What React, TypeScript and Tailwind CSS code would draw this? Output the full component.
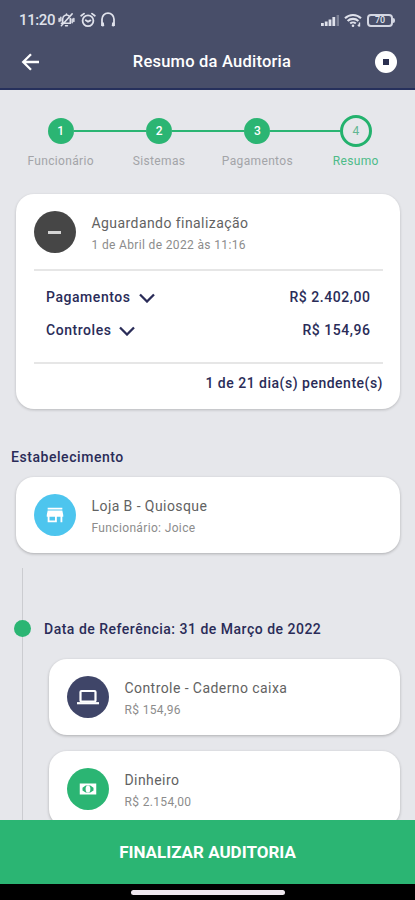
import type { ReactNode } from 'react';
import { MdStore } from 'react-icons/md';

interface Step {
  number: number;
  label: string;
}

interface InfoCardProps {
  icon: ReactNode;
  color: string;
  title: string;
  subtitle: string;
}

const steps: Step[] = [
  { number: 1, label: 'Funcionário' },
  { number: 2, label: 'Sistemas' },
  { number: 3, label: 'Pagamentos' },
  { number: 4, label: 'Resumo' },
];

const totals = [
  { label: 'Pagamentos', value: 'R$ 2.402,00' },
  { label: 'Controles', value: 'R$ 154,96' },
];

function StatusBar() {
  return (
    <div className="flex h-10 items-center justify-between pr-[20px] pl-[19px] text-[#dfe1eb]">
      <div className="flex items-center">
        <span className="w-[37px] text-[15px] font-medium whitespace-nowrap tracking-[-0.4px]">
          11:20
        </span>
        {/* muted bell */}
        <svg className="ml-[2px] h-[16px] w-[17px]" viewBox="0 0 18 17" fill="none" stroke="currentColor" strokeWidth="1.6" strokeLinecap="round">
          <path d="M5 11.5V7a4 4 0 0 1 7-2.4M13 7v5H6.5M3.5 12H6M8 14.5h2M15 2 3.5 14.5M1.2 7v3M3 5.5v4M15 7.5v4M16.8 7v3M9 2v1" />
        </svg>
        {/* alarm */}
        <svg className="ml-[5px] h-4 w-4" viewBox="0 0 16 16" fill="none" stroke="currentColor" strokeWidth="1.8" strokeLinecap="round">
          <circle cx="8" cy="8.8" r="5.4" />
          <path d="M1.2 3.8 4 1.6M14.8 3.8 12 1.6M5.8 8.2 8 9.8l2.4-1.4" />
        </svg>
        {/* headphones */}
        <svg className="ml-[4px] h-4 w-4" viewBox="0 0 16 16" fill="none" stroke="currentColor" strokeWidth="1.8" strokeLinecap="round">
          <path d="M3.4 13.2H2V7.2a6 6 0 0 1 12 0v6h-1.4" />
          <path d="M2.8 11.5v1.8M13.2 11.5v1.8" strokeWidth="2.4" />
        </svg>
      </div>
      <div className="flex items-center">
        <svg className="h-[14px] w-[20px]" viewBox="0 0 20 14" fill="currentColor">
          <rect x="0" y="10" width="2.8" height="3" />
          <rect x="3.8" y="8.5" width="2.8" height="4.5" />
          <rect x="7.6" y="6.5" width="2.8" height="6.5" />
          <rect x="11.4" y="4" width="2.8" height="9" />
          <rect x="15.6" y="2" width="2.4" height="11" opacity="0.35" />
        </svg>
        <svg className="ml-[3px] h-[15px] w-[18px]" viewBox="0 0 18 15" fill="none" stroke="currentColor" strokeWidth="2.1">
          <path d="M1 5.2a11.5 11.5 0 0 1 16 0M3.6 8a7.8 7.8 0 0 1 10.8 0M6.2 10.6a4 4 0 0 1 5.6 0" />
          <circle cx="9" cy="12.8" r="1.3" fill="currentColor" stroke="none" />
          <path d="M15.5 9.5v4M13.8 11.8l1.7 1.7" strokeWidth="1.4" />
        </svg>
        <div className="ml-[5px] flex items-center">
          <div className="flex h-[13px] w-[26px] items-center justify-center rounded-[4px] border-2 border-[#d3d6e2] text-[9px] leading-none font-medium">
            70
          </div>
          <div className="h-[5px] w-[2px] rounded-r bg-[#d3d6e2]" />
        </div>
      </div>
    </div>
  );
}

function Header() {
  return (
    <header className="h-[90px] shrink-0 border-b-2 border-[#26305c] bg-[#484e69]">
      <StatusBar />
      <div className="flex h-[44px] items-center pr-[18px] pl-[21px] text-white">
        <svg className="h-[18px] w-[22px] shrink-0" viewBox="0 0 22 18" fill="none" stroke="currentColor" strokeWidth="2.3">
          <path d="M18 9H2.5M10 1.2 2.2 9l7.8 7.8" />
        </svg>
        <h1 className="flex-1 pl-[6px] text-center text-[16.5px] font-medium tracking-[0.22px]">
          Resumo da Auditoria
        </h1>
        <div className="flex size-[22px] shrink-0 items-center justify-center rounded-full bg-white">
          <div className="size-[6px] bg-[#2b3050]" />
        </div>
      </div>
    </header>
  );
}

function Stepper() {
  return (
    <div className="grid grid-cols-4 pt-[25px] pr-[10px] pl-[11.5px]">
      {steps.map(({ number, label }, index) => {
        const isCurrent = index === steps.length - 1;
        return (
          <div key={number} className="flex flex-col items-center">
            <div className="flex h-8 w-full items-center">
              <div className={`h-0.5 flex-1 ${index > 0 ? 'bg-[#2bb573]' : ''}`} />
              {isCurrent ? (
                <div className="flex size-8 items-center justify-center rounded-full border-3 border-[#23b26d] text-[12px] text-[#62b692]">
                  {number}
                </div>
              ) : (
                <div className="flex size-[26px] items-center justify-center rounded-full bg-[#2bb573] text-[12px] font-medium text-white">
                  {number}
                </div>
              )}
              <div className={`h-0.5 flex-1 ${isCurrent ? '' : 'bg-[#2bb573]'}`} />
            </div>
            <span
              className={`mt-[6px] text-[12px] leading-4 tracking-[0.35px] ${isCurrent ? 'text-[#4dbb88]' : 'text-[#a3a4a8]'}`}
            >
              {label}
            </span>
          </div>
        );
      })}
    </div>
  );
}

function CardHeading({ icon, color, title, subtitle }: InfoCardProps) {
  return (
    <div className="flex items-center">
      <div className={`flex size-[42px] shrink-0 items-center justify-center rounded-full text-white ${color}`}>
        {icon}
      </div>
      <div className="ml-4 flex flex-col pt-[2px]">
        <span className="text-[14px] leading-6 tracking-[0.43px] text-[#626262]">{title}</span>
        <span className="text-[12px] leading-5 tracking-[0.35px] text-[#8c8c8c]">{subtitle}</span>
      </div>
    </div>
  );
}

function InfoCard(props: InfoCardProps) {
  return (
    <div className="flex h-[76px] items-center rounded-[18px] bg-white pl-[17.5px] shadow-[0_1px_3px_rgba(0,0,0,0.25)]">
      <CardHeading {...props} />
    </div>
  );
}

function SummaryCard() {
  return (
    <section className="mx-4 mt-[25px] h-[215px] w-[384px] rounded-[18px] bg-white pt-[15px] pr-[17px] pl-[17.5px] text-[#2a2c58] shadow-[0_1px_3px_rgba(0,0,0,0.2)]">
      <CardHeading
        icon={<div className="h-[3px] w-[13px] bg-[#d5d5d5]" />}
        color="bg-[#464646]"
        title="Aguardando finalização"
        subtitle="1 de Abril de 2022 às 11:16"
      />
      <div className="mt-[14px] h-0.5 bg-[#e6e6e6]" />
      <div className="flex flex-col px-[12.5px] pt-[10px]">
        {totals.map(({ label, value }) => (
          <div key={label} className="flex h-[33px] items-center text-[14px] font-medium">
            <span className="tracking-[0.55px]">{label}</span>
            <svg className="ml-[8px] h-[10px] w-4" viewBox="0 0 16 10" fill="none" stroke="currentColor" strokeWidth="2.3">
              <path d="m1 1.5 7 7 7-7" />
            </svg>
            <span className="ml-auto tracking-[0.55px]">{value}</span>
          </div>
        ))}
      </div>
      <div className="mt-[15px] h-0.5 bg-[#e6e6e6]" />
      <p className="mt-[9px] text-right text-[14px] leading-5 font-medium tracking-[0.5px]">
        1 de 21 dia(s) pendente(s)
      </p>
    </section>
  );
}

function LaptopIcon() {
  return (
    <svg className="h-[16px] w-[22px]" viewBox="0 0 22 16" fill="none" stroke="currentColor">
      <rect x="3.5" y="2" width="15" height="10.5" rx="1" strokeWidth="2.2" />
      <path d="M0 14.2h22" strokeWidth="2.2" />
    </svg>
  );
}

function CashIcon() {
  return (
    <svg className="size-[22px]" viewBox="0 0 24 24" fill="currentColor">
      <path
        fillRule="evenodd"
        d="M3 6h18v12H3V6ZM9.5 8.2 6 10.5v3l3.5 2.3h5l3.5-2.3v-3l-3.5-2.3h-5Z"
      />
      <ellipse cx="12" cy="12" rx="2.6" ry="3.9" />
    </svg>
  );
}

function Timeline() {
  return (
    <section className="mt-[15px] flex pr-[15px]">
      <div className="relative ml-[22px] w-px shrink-0 bg-[#cbccd0]">
        <div className="absolute top-[52px] -left-2 size-[17px] rounded-full bg-[#2bb573]" />
      </div>
      <div className="flex-1 pt-[51px]">
        <h2 className="ml-[21px] text-[14px] leading-5 font-medium tracking-[0.5px] text-[#2a2c58]">
          Data de Referência: 31 de Março de 2022
        </h2>
        <div className="mt-5 ml-[26px] flex flex-col gap-4">
          <InfoCard
            icon={<LaptopIcon />}
            color="bg-[#3f4568]"
            title="Controle - Caderno caixa"
            subtitle="R$ 154,96"
          />
          <InfoCard icon={<CashIcon />} color="bg-[#2bb573]" title="Dinheiro" subtitle="R$ 2.154,00" />
        </div>
      </div>
    </section>
  );
}

export default function App() {
  return (
    <div className="flex h-[900px] w-[415px] flex-col overflow-hidden bg-[#e6e7eb] font-[Roboto,sans-serif]">
      <Header />
      <main className="min-h-0 flex-1 overflow-hidden">
        <Stepper />
        <SummaryCard />
        <h2 className="mt-[38px] ml-[11px] text-[14px] leading-5 font-medium tracking-[0.55px] text-[#2a2c58]">
          Estabelecimento
        </h2>
        <div className="mt-[10px] mr-[15px] ml-4">
          <InfoCard
            icon={<MdStore className="size-[22px]" />}
            color="bg-[#4dc5ee]"
            title="Loja B - Quiosque"
            subtitle="Funcionário: Joice"
          />
        </div>
        <Timeline />
      </main>
      <button className="h-16 shrink-0 bg-[#2bb573] pt-[2px] text-[17px] font-bold text-white">
        FINALIZAR AUDITORIA
      </button>
      <div className="flex h-4 shrink-0 justify-center bg-black pt-[6px]">
        <div className="h-[5px] w-[154px] rounded-full bg-[#eee8ee]" />
      </div>
    </div>
  );
}
